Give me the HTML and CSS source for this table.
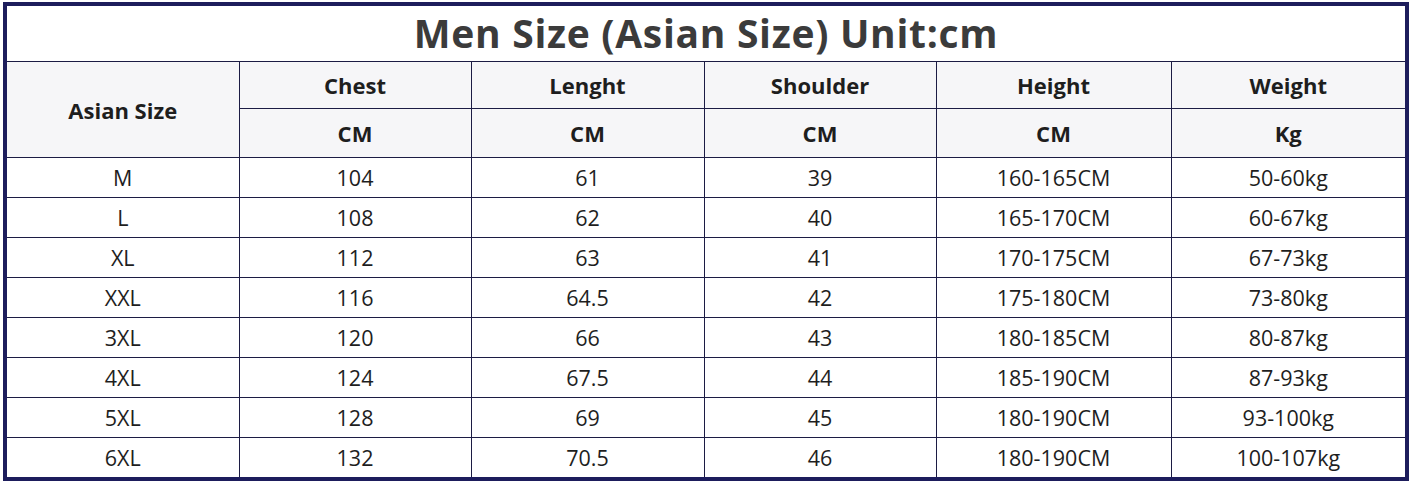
FILE: index.html
```html
<!DOCTYPE html>
<html>
<head>
<meta charset="utf-8">
<link rel="stylesheet" href="styles.css">
</head>
<body>
<div class="frame">
<table class="chart">
<colgroup>
<col class="c1"><col class="c2"><col class="c3"><col class="c4"><col class="c5"><col class="c6">
</colgroup>
<tr class="title-row"><td colspan="6" class="title">Men Size (Asian Size) Unit:cm</td></tr>
<tr class="head1">
<th rowspan="2">Asian Size</th><th>Chest</th><th>Lenght</th><th>Shoulder</th><th>Height</th><th>Weight</th>
</tr>
<tr class="head2"><th>CM</th><th>CM</th><th>CM</th><th>CM</th><th>Kg</th></tr>
<tr><td>M</td><td>104</td><td>61</td><td>39</td><td>160-165CM</td><td>50-60kg</td></tr>
<tr><td>L</td><td>108</td><td>62</td><td>40</td><td>165-170CM</td><td>60-67kg</td></tr>
<tr><td>XL</td><td>112</td><td>63</td><td>41</td><td>170-175CM</td><td>67-73kg</td></tr>
<tr><td>XXL</td><td>116</td><td>64.5</td><td>42</td><td>175-180CM</td><td>73-80kg</td></tr>
<tr><td>3XL</td><td>120</td><td>66</td><td>43</td><td>180-185CM</td><td>80-87kg</td></tr>
<tr><td>4XL</td><td>124</td><td>67.5</td><td>44</td><td>185-190CM</td><td>87-93kg</td></tr>
<tr><td>5XL</td><td>128</td><td>69</td><td>45</td><td>180-190CM</td><td>93-100kg</td></tr>
<tr><td>6XL</td><td>132</td><td>70.5</td><td>46</td><td>180-190CM</td><td>100-107kg</td></tr>
</table>
</div>
</body>
</html>
```
FILE: styles.css
```css
html, body {
  margin: 0;
  padding: 0;
  background: #ffffff;
}
body {
  padding: 2px 0 0 3px;
  font-family: "Open Sans", "Noto Sans", sans-serif;
}
.frame {
  width: 1398px;
  border: 4px solid #1d1d5c;
  background: #ffffff;
}
.chart {
  width: 1398px;
  border-collapse: collapse;
  border-style: hidden;
  table-layout: fixed;
}
.c1 { width: 232px; }
.c2 { width: 232px; }
.c3 { width: 233px; }
.c4 { width: 232px; }
.c5 { width: 235px; }
.c6 { width: 234px; }
.chart td, .chart th {
  border: 1px solid #1c1c44;
  text-align: center;
  padding: 0;
  color: #1e1e1e;
}
.chart td {
  height: 39px;
  font-size: 21.5px;
  font-weight: 400;
}
.chart th {
  background: #f6f6f8;
  font-size: 22px;
  font-weight: 700;
}
.head1 th { height: 46px; }
.head2 th { height: 48px; }
.chart td.title {
  height: 53px;
  font-size: 39px;
  font-weight: 700;
  letter-spacing: 0.7px;
  color: #3b3b3b;
  line-height: 1;
  padding-bottom: 2px;
}
```
